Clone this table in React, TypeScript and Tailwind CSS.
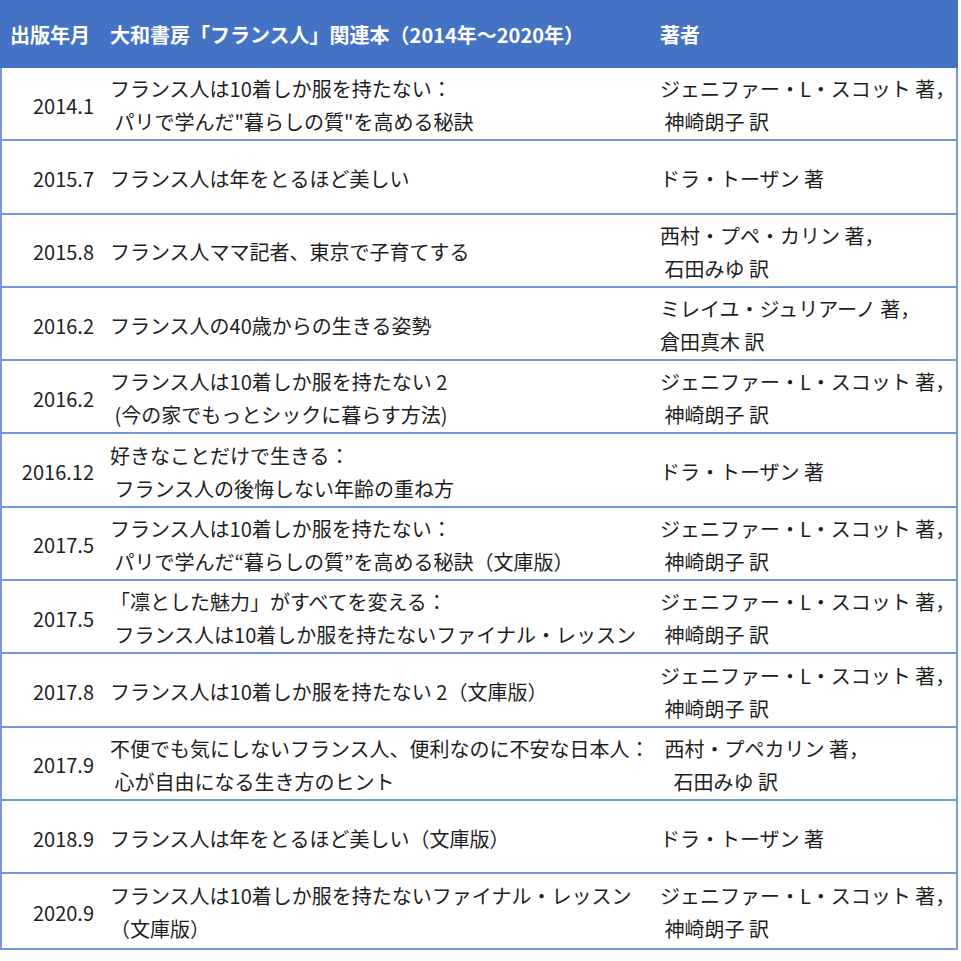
import React from "react";

const jen = ["ジェニファー・L・スコット 著，", " 神崎朗子 訳"];
const dora = ["ドラ・トーザン 著"];

interface Book {
  date: string;
  title: string[];
  author: string[];
}

const books: Book[] = [
  { date: "2014.1", title: ["フランス人は10着しか服を持たない：", " パリで学んだ\"暮らしの質\"を高める秘訣"], author: jen },
  { date: "2015.7", title: ["フランス人は年をとるほど美しい"], author: dora },
  { date: "2015.8", title: ["フランス人ママ記者、東京で子育てする"], author: ["西村・プペ・カリン 著，", " 石田みゆ 訳"] },
  { date: "2016.2", title: ["フランス人の40歳からの生きる姿勢"], author: ["ミレイユ・ジュリアーノ 著，", "倉田真木 訳"] },
  { date: "2016.2", title: ["フランス人は10着しか服を持たない 2", " (今の家でもっとシックに暮らす方法)"], author: jen },
  { date: "2016.12", title: ["好きなことだけで生きる：", " フランス人の後悔しない年齢の重ね方"], author: dora },
  { date: "2017.5", title: ["フランス人は10着しか服を持たない：", " パリで学んだ“暮らしの質”を高める秘訣（文庫版）"], author: jen },
  { date: "2017.5", title: ["「凛とした魅力」がすべてを変える：", " フランス人は10着しか服を持たないファイナル・レッスン"], author: jen },
  { date: "2017.8", title: ["フランス人は10着しか服を持たない 2（文庫版）"], author: jen },
  { date: "2017.9", title: ["不便でも気にしないフランス人、便利なのに不安な日本人：", " 心が自由になる生き方のヒント"], author: [" 西村・プペカリン 著，", "   石田みゆ 訳"] },
  { date: "2018.9", title: ["フランス人は年をとるほど美しい（文庫版）"], author: dora },
  { date: "2020.9", title: ["フランス人は10着しか服を持たないファイナル・レッスン", "（文庫版）"], author: jen },
];

export default function App() {
  return (
    <div
      className="w-[961px] h-[961px] bg-white text-[20px] leading-[33px] text-[#1e1e1e]"
      style={{ fontFamily: '"Noto Sans CJK JP", "Noto Sans", sans-serif' }}
    >
      <div className="w-[958px]">
        {/* header */}
        <div className="h-[68px] bg-[#4472c4] text-white font-bold flex items-center">
          <div className="w-[96px] pl-[10px]">出版年月</div>
          <div className="ml-[14px] w-[550px]">大和書房「フランス人」関連本（2014年～2020年）</div>
          <div className="flex-1">著者</div>
        </div>

        {/* body */}
        <div className="border-x-2 border-b-2 border-[#7398dc] divide-y-2 divide-[#7398dc]">
          {books.map((b, i) => (
            <div key={i} className="h-[73.3px] pt-[3px] flex items-center">
              <div className="w-[92px] text-right">{b.date}</div>
              <div className="ml-[16px] w-[550px] whitespace-pre">
                {b.title.map((t, j) => (
                  <div key={j}>{t}</div>
                ))}
              </div>
              <div className="flex-1 whitespace-pre">
                {b.author.map((a, j) => (
                  <div key={j}>{a}</div>
                ))}
              </div>
            </div>
          ))}
        </div>
      </div>
    </div>
  );
}
